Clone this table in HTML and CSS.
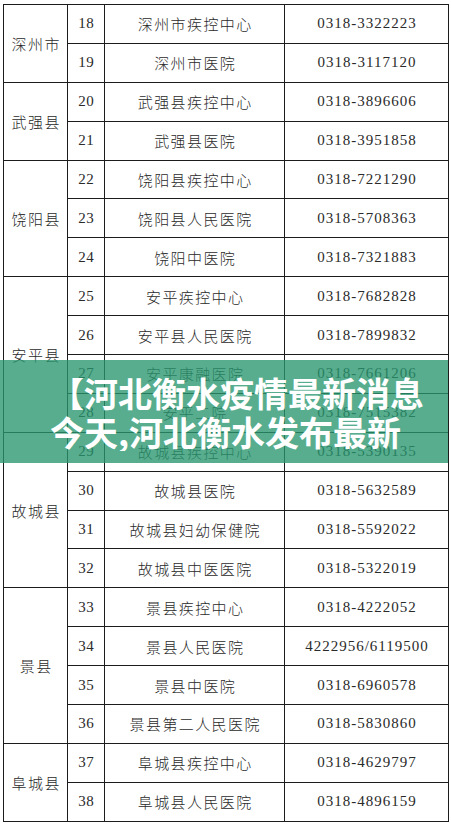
FILE: index.html
```html
<!DOCTYPE html>
<html lang="zh-CN">
<head>
<meta charset="utf-8">
<title>衡水疫情联系电话</title>
<link rel="stylesheet" href="styles.css">
</head>
<body>
<div class="page">
  <table class="contacts">
    <colgroup>
      <col class="c-county"><col class="c-num"><col class="c-name"><col class="c-phone">
    </colgroup>
    <tbody>
      <tr><td class="county" rowspan="2">深州市</td><td class="num">18</td><td class="name">深州市疾控中心</td><td class="phone">0318-3322223</td></tr>
      <tr><td class="num">19</td><td class="name">深州市医院</td><td class="phone">0318-3117120</td></tr>
      <tr><td class="county" rowspan="2">武强县</td><td class="num">20</td><td class="name">武强县疾控中心</td><td class="phone">0318-3896606</td></tr>
      <tr><td class="num">21</td><td class="name">武强县医院</td><td class="phone">0318-3951858</td></tr>
      <tr><td class="county" rowspan="3">饶阳县</td><td class="num">22</td><td class="name">饶阳县疾控中心</td><td class="phone">0318-7221290</td></tr>
      <tr><td class="num">23</td><td class="name">饶阳县人民医院</td><td class="phone">0318-5708363</td></tr>
      <tr><td class="num">24</td><td class="name">饶阳中医院</td><td class="phone">0318-7321883</td></tr>
      <tr><td class="county" rowspan="4">安平县</td><td class="num">25</td><td class="name">安平疾控中心</td><td class="phone">0318-7682828</td></tr>
      <tr><td class="num">26</td><td class="name">安平县人民医院</td><td class="phone">0318-7899832</td></tr>
      <tr><td class="num">27</td><td class="name">安平康融医院</td><td class="phone">0318-7661206</td></tr>
      <tr><td class="num">28</td><td class="name">安平二院</td><td class="phone">0318-7515382</td></tr>
      <tr><td class="county" rowspan="4">故城县</td><td class="num">29</td><td class="name">故城县疾控中心</td><td class="phone">0318-5390135</td></tr>
      <tr><td class="num">30</td><td class="name">故城县医院</td><td class="phone">0318-5632589</td></tr>
      <tr><td class="num">31</td><td class="name">故城县妇幼保健院</td><td class="phone">0318-5592022</td></tr>
      <tr><td class="num">32</td><td class="name">故城县中医医院</td><td class="phone">0318-5322019</td></tr>
      <tr><td class="county" rowspan="4">景县</td><td class="num">33</td><td class="name">景县疾控中心</td><td class="phone">0318-4222052</td></tr>
      <tr><td class="num">34</td><td class="name">景县人民医院</td><td class="phone">4222956/6119500</td></tr>
      <tr><td class="num">35</td><td class="name">景县中医院</td><td class="phone">0318-6960578</td></tr>
      <tr><td class="num">36</td><td class="name">景县第二人民医院</td><td class="phone">0318-5830860</td></tr>
      <tr><td class="county" rowspan="2">阜城县</td><td class="num">37</td><td class="name">阜城县疾控中心</td><td class="phone">0318-4629797</td></tr>
      <tr><td class="num">38</td><td class="name">阜城县人民医院</td><td class="phone">0318-4896159</td></tr>
    </tbody>
  </table>
  <div class="banner">
    <div class="banner-title">【河北衡水疫情最新消息今天,河北衡水发布最新通告】</div>
  </div>
</div>
</body>
</html>
```

FILE: styles.css
```css
html, body {
  margin: 0;
  padding: 0;
  background: #ffffff;
}

.page {
  position: relative;
  width: 451px;
  height: 825px;
  padding: 4px 0 0 3px;
  box-sizing: border-box;
  overflow: hidden;
}

.contacts {
  border-collapse: collapse;
  table-layout: fixed;
  width: 445px;
  color: #2a2a2a;
}

.c-county { width: 64px; }
.c-num { width: 37px; }
.c-name { width: 180px; }
.c-phone { width: 164px; }

.contacts td {
  border: 1.5px solid #1c1c1c;
  height: 37.9px;
  padding: 0;
  text-align: center;
  vertical-align: middle;
  white-space: nowrap;
}

.county,
.name {
  font-family: "Noto Sans CJK SC", "Noto Sans CJK JP", sans-serif;
  font-weight: 300;
  font-size: 15px;
  letter-spacing: 1.4px;
  text-indent: 1.4px;
}

.num,
.phone {
  font-family: "Liberation Serif", "DejaVu Serif", serif;
  font-size: 15px;
  letter-spacing: 1px;
  text-indent: 1px;
}

.num {
  letter-spacing: 0.5px;
  text-indent: 0.5px;
}

.banner {
  position: absolute;
  left: 0;
  top: 360px;
  width: 448px;
  height: 103px;
  background: rgba(40, 150, 110, 0.78);
  box-sizing: border-box;
  padding: 13px 0 0 50px;
  overflow: hidden;
}

.banner-title {
  width: 378px;
  height: 78px;
  overflow: hidden;
  font-family: "Noto Sans CJK SC", "Noto Sans CJK JP", sans-serif;
  font-weight: 700;
  font-size: 34px;
  line-height: 39px;
  color: #ffffff;
}
```
